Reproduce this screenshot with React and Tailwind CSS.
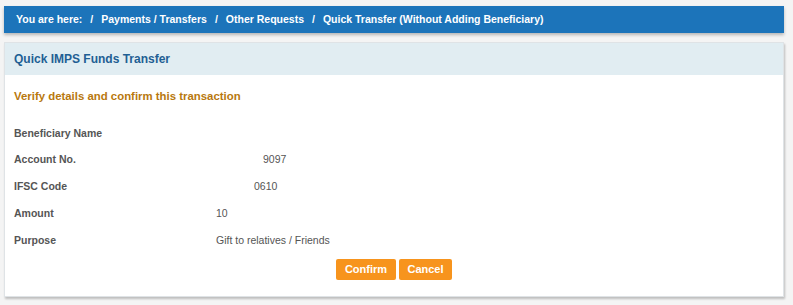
import React from "react";

const rows = [
  { label: "Beneficiary Name", value: "", pad: "pl-0" },
  { label: "Account No.", value: "9097", pad: "pl-[47px]" },
  { label: "IFSC Code", value: "0610", pad: "pl-[38px]" },
  { label: "Amount", value: "10", pad: "pl-0" },
  { label: "Purpose", value: "Gift to relatives / Friends", pad: "pl-0" },
];

export default function App() {
  return (
    <div
      className="w-[793px] h-[305px] bg-[#f4f4f4] pt-[6px] pl-[4px] pr-[9px]"
      style={{ fontFamily: '"Liberation Sans", Arial, sans-serif' }}
    >
      <div className="h-[27px] bg-[#1c74ba] flex items-center gap-2 pl-[12px] text-white font-bold text-[10.5px] shadow-[0_2px_3px_rgba(0,0,0,0.25)]">
        <span>You are here:</span>
        <span>/</span>
        <span>Payments / Transfers</span>
        <span>/</span>
        <span>Other Requests</span>
        <span>/</span>
        <span>Quick Transfer (Without Adding Beneficiary)</span>
      </div>

      <div className="mt-[9px] h-[255px] bg-white border border-[#dfe3e6] shadow-[1px_2px_2px_rgba(0,0,0,0.22)] flex flex-col">
        <div className="h-[32px] bg-[#e1edf2] flex items-center pl-[9px] text-[12px] font-bold text-[#1f5f94]">
          Quick IMPS Funds Transfer
        </div>
        <div className="pl-[9px] pt-[13px] text-[11.4px] font-bold text-[#b8780e]">
          Verify details and confirm this transaction
        </div>
        <div className="mt-[15px] flex flex-col">
          {rows.map((r) => (
            <div key={r.label} className="h-[26.8px] flex items-center text-[10.5px] text-[#555555]">
              <div className="w-[211px] pl-[9px] font-bold">{r.label}</div>
              <div className={r.pad}>{r.value}</div>
            </div>
          ))}
        </div>
        <div className="mt-[5px] flex justify-center gap-[3px]">
          <button className="w-[60px] h-[21px] rounded-[2px] bg-[#f7941d] text-white font-bold text-[11px]">
            Confirm
          </button>
          <button className="w-[53px] h-[21px] rounded-[2px] bg-[#f7941d] text-white font-bold text-[11px]">
            Cancel
          </button>
        </div>
      </div>
    </div>
  );
}
